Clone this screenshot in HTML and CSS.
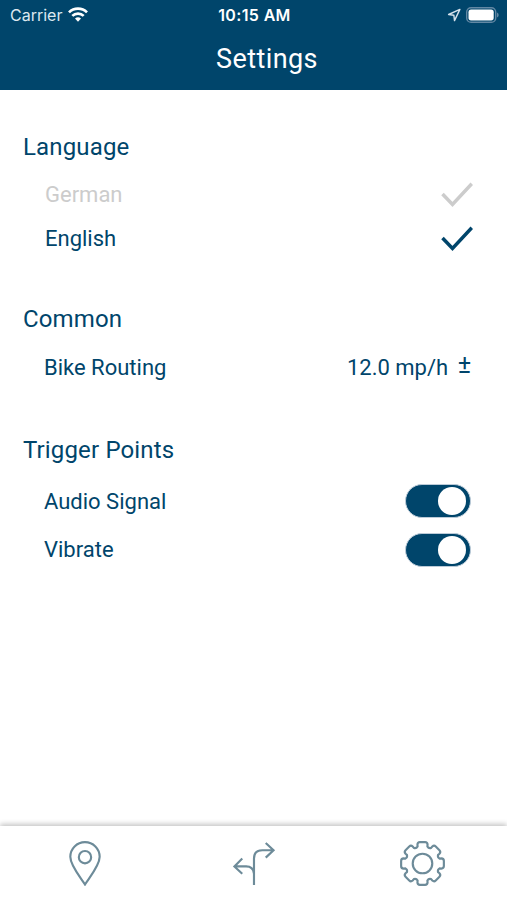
FILE: index.html
```
<!DOCTYPE html>
<html lang="en">
<head>
  <meta charset="UTF-8">
  <meta name="viewport" content="width=device-width, initial-scale=1.0">
  <title>Settings</title>
  <link rel="stylesheet" href="styles.css">
</head>
<body>
  <header>
    <div class="status">
      <div class="status-left">
        <span class="carrier">Carrier</span>
        <svg class="wifi" width="20" height="15" viewBox="0 0 20 15" fill="none" stroke="#fff" stroke-width="2.7">
          <path d="M1 5.4a12.8 12.8 0 0 1 18 0"/>
          <path d="M4.3 8.9a8.2 8.2 0 0 1 11.4 0"/>
          <path d="M10 14.7l-3-3.1a4.4 4.4 0 0 1 6 0z" fill="#fff" stroke="none"/>
        </svg>
      </div>
      <span class="time">10:15 AM</span>
      <div class="status-right">
        <svg width="14" height="14" viewBox="0 0 14 14" fill="none" stroke="#d5e2ec" stroke-width="1.4" stroke-linejoin="round">
          <path d="M12.9 1.4L1.6 6.5l5.3.8.6 5.3z"/>
        </svg>
        <svg width="33" height="16" viewBox="0 0 33 16">
          <rect x="0.7" y="0.7" width="29" height="14.6" rx="4.4" fill="none" stroke="#6288a4" stroke-width="1.4"/>
          <rect x="2.5" y="2.6" width="25.2" height="10.8" rx="2.6" fill="#fff"/>
          <path d="M31 5.5q1.7.8 1.7 2.5T31 10.5z" fill="#6288a4"/>
        </svg>
      </div>
    </div>
    <h1>Settings</h1>
  </header>

  <main>
    <section>
      <h2>Language</h2>
      <div class="row language inactive">
        <span>German</span>
        <svg width="32" height="26" viewBox="0 0 32 26"><path d="M1.5 12L11.5 22.5L30.8 1.8"/></svg>
      </div>
      <div class="row language">
        <span>English</span>
        <svg width="32" height="26" viewBox="0 0 32 26"><path d="M1.5 12L11.5 22.5L30.8 1.8"/></svg>
      </div>
    </section>

    <section class="common">
      <h2>Common</h2>
      <div class="row">
        <span>Bike Routing</span>
        <span class="speed">12.0 mp/h <span class="plusminus">±</span></span>
      </div>
    </section>

    <section class="trigger">
      <h2>Trigger Points</h2>
      <div class="row">
        <span>Audio Signal</span>
        <span class="toggle"></span>
      </div>
      <div class="row">
        <span>Vibrate</span>
        <span class="toggle"></span>
      </div>
    </section>
  </main>

  <nav>
    <a><svg width="45" height="45" viewBox="0 0 46 46">
      <path d="M23.5 44.5C19.500 38 8.500 25.500 8.500 16.200a15 15 0 0 1 30 0C38.500 25.500 27.500 38 23.500 44.500z"/>
      <circle cx="23.5" cy="16.5" r="6.3"/>
    </svg></a>
    <a><svg width="45" height="45" viewBox="0 0 46 46">
      <path d="M23.5 45V18q0-8.5 8.5-8.5h11M35.5 2l8 7.5-8 7.5"/>
      <path d="M23.5 33q-1-7-8-7H3.5M11.5 18l-8 8 8 7.5"/>
    </svg></a>
    <a><svg width="45" height="45" viewBox="0 0 46 46">
      <path id="gear"/>
      <circle cx="23" cy="23" r="10"/>
    </svg></a>
  </nav>

  <script>
    // eight rounded teeth, one every 45 degrees
    const point = (r, deg) => {
      const a = deg * Math.PI / 180;
      return (23 + r * Math.sin(a)).toFixed(2) + ' ' + (23 - r * Math.cos(a)).toFixed(2);
    };
    let d = '';
    for (let i = 0; i < 8; i++) {
      const a = i * 45;
      d += (i ? 'L' : 'M') + point(18.2, a - 16) + 'L' + point(20, a - 15);
      d += 'Q' + point(22.4, a - 13) + ' ' + point(22, a - 7);
      d += 'L' + point(22, a + 7);
      d += 'Q' + point(22.4, a + 13) + ' ' + point(20, a + 15);
      d += 'L' + point(18.2, a + 16);
      d += 'Q' + point(16.4, a + 22.5) + ' ' + point(18.2, a + 29);
    }
    document.getElementById('gear').setAttribute('d', d + 'Z');
  </script>
</body>
</html>
```

FILE: styles.css
```
* { box-sizing: border-box; }
body { margin: 0; height: 900px; display: flex; flex-direction: column; font-family: Roboto, sans-serif; background: #fff; color: #00456b; overflow: hidden; }

header { height: 90px; background: #00456b; color: #fff; }
.status { height: 30px; padding: 0 8px 0 10px; display: grid; grid-template-columns: 1fr auto 1fr; align-items: center; font-family: Inter, sans-serif; font-size: 16px; }
.status-left, .status-right { display: flex; align-items: center; }
.status-left { gap: 6px; color: #dce8f0; }
.status-right { justify-content: flex-end; gap: 5px; }
.carrier { letter-spacing: 0; }
.wifi { margin-top: -1px; }
.time { font-weight: 600; letter-spacing: 0.35px; }
h1 { margin: 11px 0 0; padding-left: 27px; font-size: 27px; line-height: 36px; font-weight: 400; letter-spacing: 0.4px; text-align: center; }

main { flex: 1; padding: 42px 36px 0 23px; }
h2 { margin: 0 0 11px; font-size: 24px; line-height: 30px; font-weight: 400; letter-spacing: 0.15px; }
.row { height: 44px; padding-left: 21px; display: flex; align-items: center; justify-content: space-between; font-size: 22px; letter-spacing: 0; }
.language { padding-left: 22px; }
.language svg { margin-right: -2px; fill: none; stroke: #00456b; stroke-width: 3.5; }
.language span { margin-top: -1px; }
.inactive { color: #ccc; }
.inactive svg { stroke: #ccc; }
.common { margin-top: 43px; }
.trigger { margin-top: 46px; }
.trigger h2 { margin-bottom: 12px; }
.trigger .row { height: 48.5px; }
.plusminus { margin-left: 4px; font-size: 25px; line-height: 20px; vertical-align: 2px; }
.toggle { width: 66px; height: 34px; padding-right: 4px; display: flex; align-items: center; justify-content: flex-end; border: 1px solid #bccbd8; border-radius: 17px; background: #00456b; }
.toggle::after { content: ""; width: 28px; height: 28px; border-radius: 50%; background: #fff; }

nav { height: 74px; display: grid; grid-template-columns: repeat(3, 1fr); justify-items: center; background: #fff; box-shadow: 0 -2px 5px rgba(0, 0, 0, 0.23); }
nav a { padding-top: 15px; }
nav svg { display: block; fill: none; stroke: #6d8b99; stroke-width: 2.2; }
```
